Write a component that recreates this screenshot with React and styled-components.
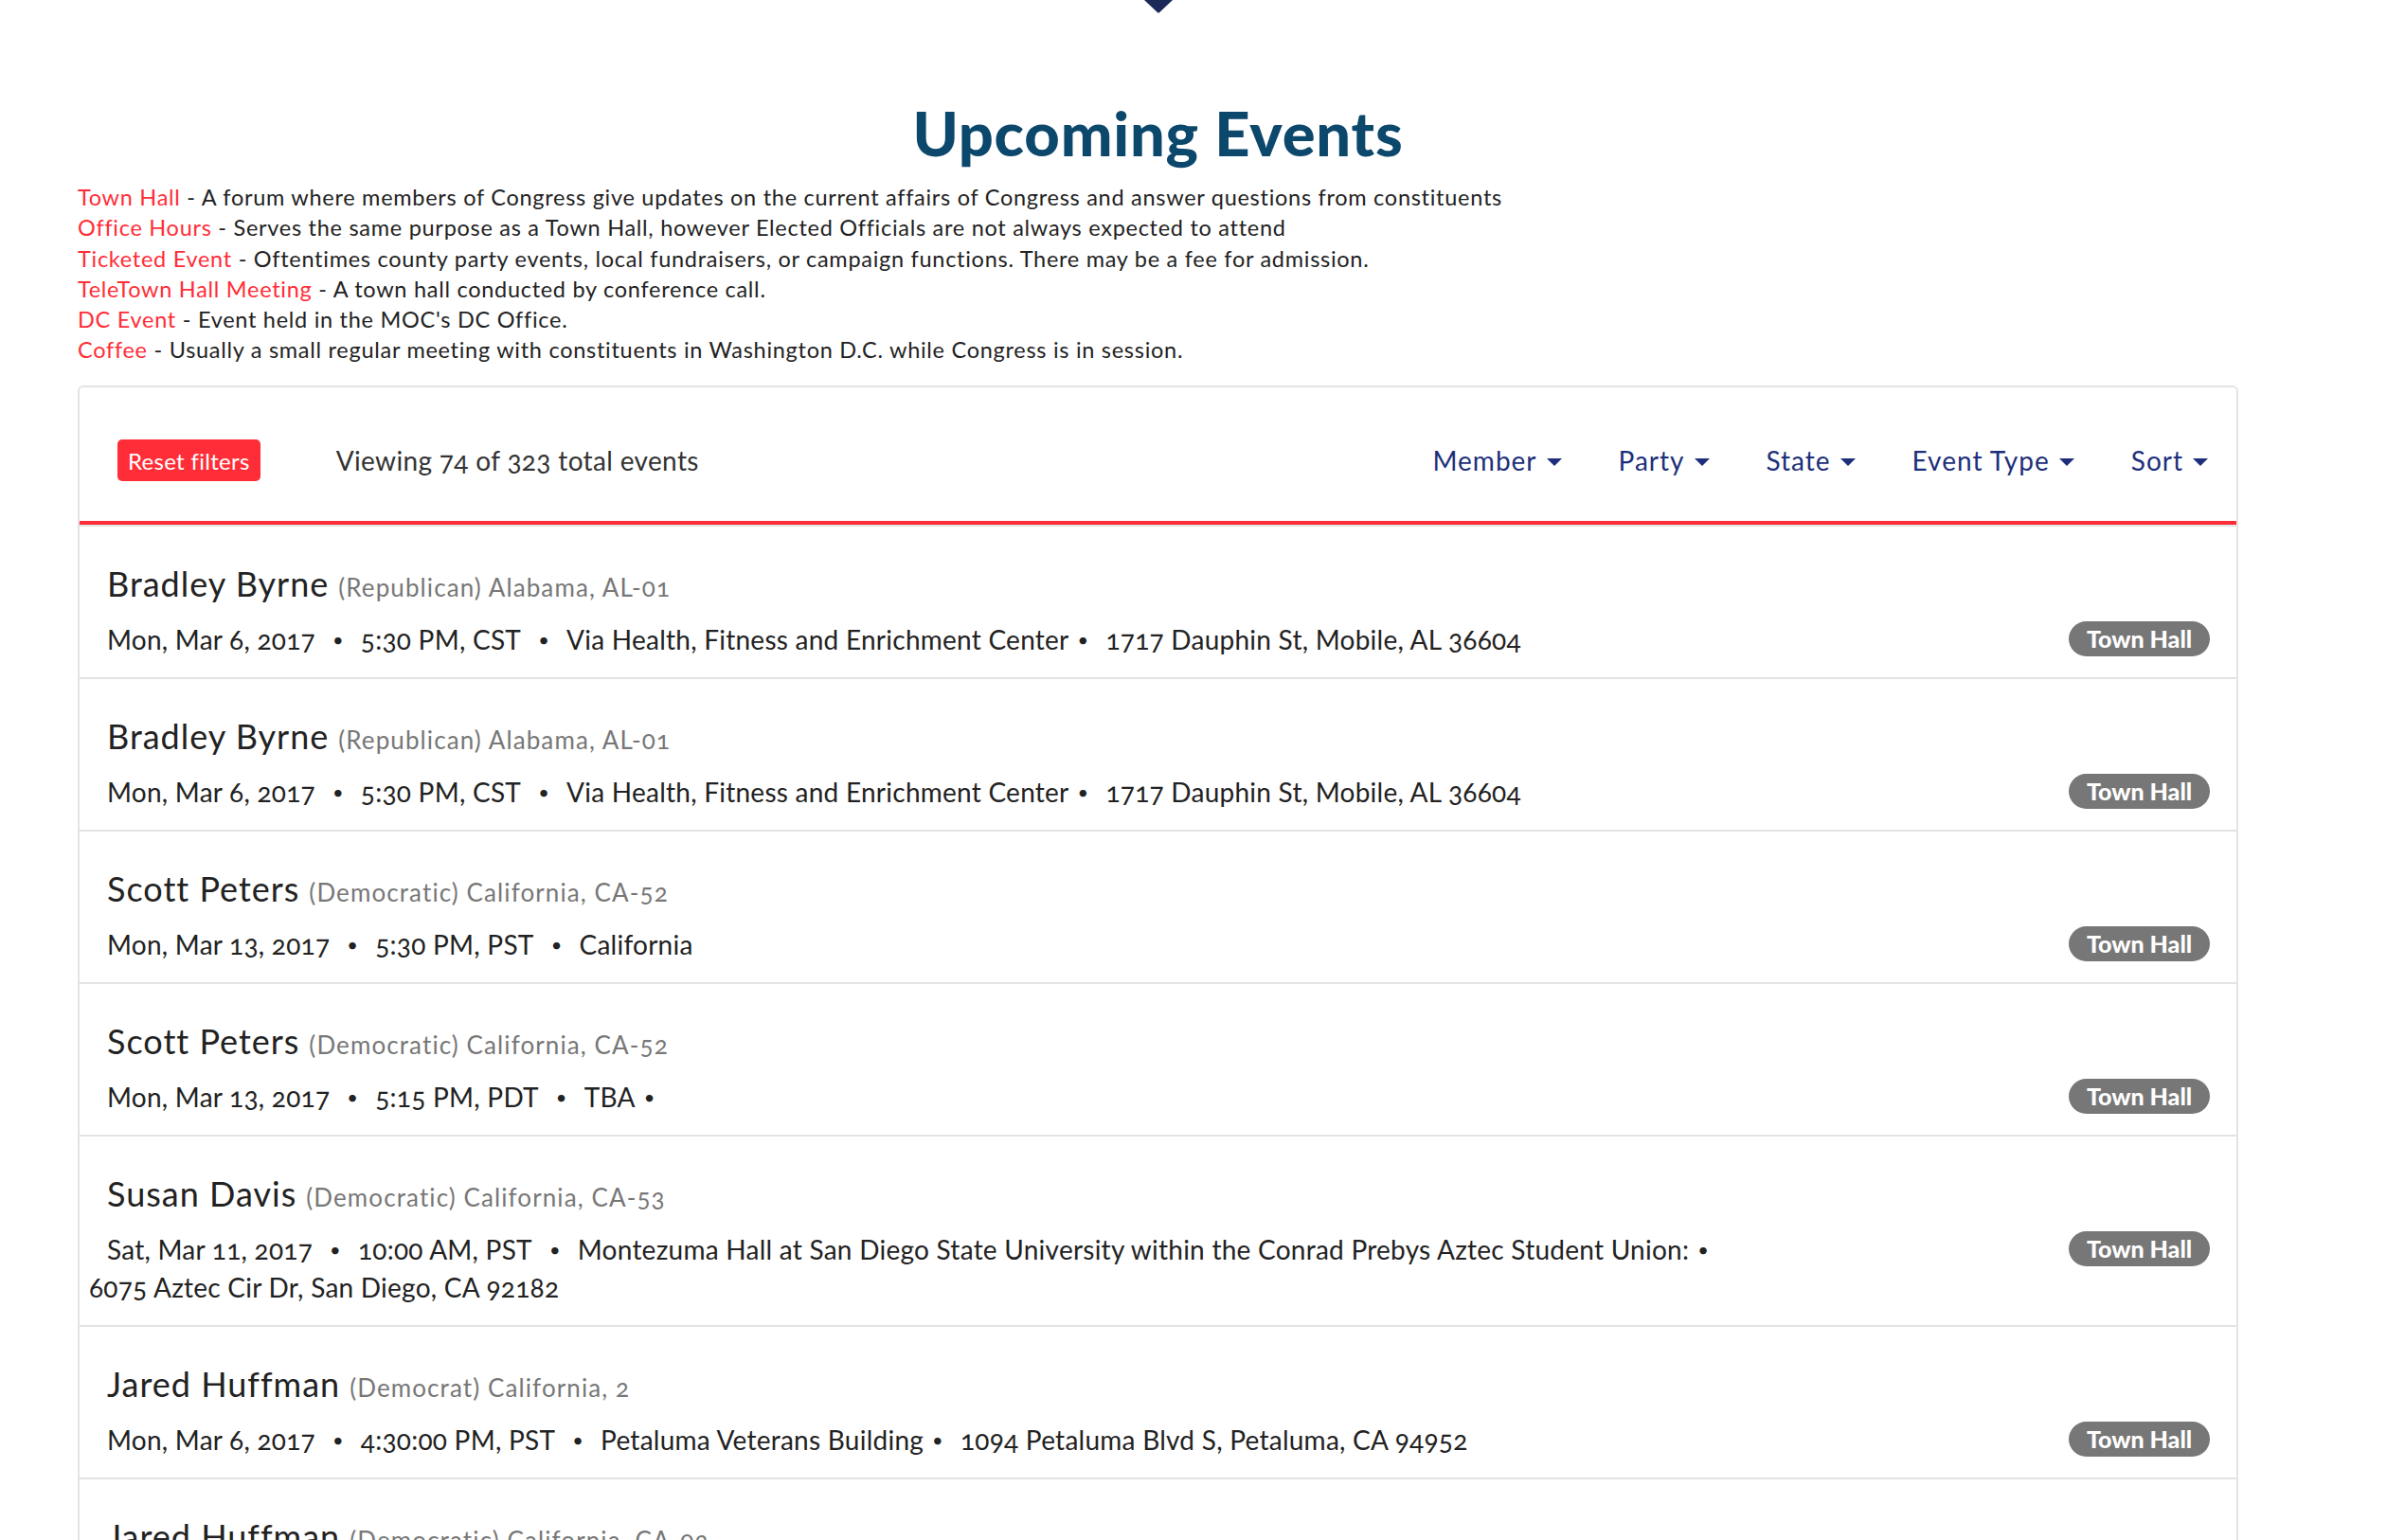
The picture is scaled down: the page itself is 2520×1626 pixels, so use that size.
import React from 'react';
import styled, { createGlobalStyle } from 'styled-components';

const GlobalStyle = createGlobalStyle`
  html, body {
    margin: 0;
    padding: 0;
    background: #fff;
  }
  body {
    font-family: Lato, "Open Sans", sans-serif;
    color: #222;
  }
`;

const definitions = [
  { term: 'Town Hall', text: 'A forum where members of Congress give updates on the current affairs of Congress and answer questions from constituents' },
  { term: 'Office Hours', text: 'Serves the same purpose as a Town Hall, however Elected Officials are not always expected to attend' },
  { term: 'Ticketed Event', text: 'Oftentimes county party events, local fundraisers, or campaign functions. There may be a fee for admission.' },
  { term: 'TeleTown Hall Meeting', text: 'A town hall conducted by conference call.' },
  { term: 'DC Event', text: "Event held in the MOC's DC Office." },
  { term: 'Coffee', text: 'Usually a small regular meeting with constituents in Washington D.C. while Congress is in session.' },
];

const events = [
  { name: 'Bradley Byrne', meta: '(Republican) Alabama, AL-01', date: 'Mon, Mar 6, 2017', time: '5:30 PM, CST', venue: 'Via Health, Fitness and Enrichment Center', address: '1717 Dauphin St, Mobile, AL 36604' },
  { name: 'Bradley Byrne', meta: '(Republican) Alabama, AL-01', date: 'Mon, Mar 6, 2017', time: '5:30 PM, CST', venue: 'Via Health, Fitness and Enrichment Center', address: '1717 Dauphin St, Mobile, AL 36604' },
  { name: 'Scott Peters', meta: '(Democratic) California, CA-52', date: 'Mon, Mar 13, 2017', time: '5:30 PM, PST', venue: '', address: 'California' },
  { name: 'Scott Peters', meta: '(Democratic) California, CA-52', date: 'Mon, Mar 13, 2017', time: '5:15 PM, PDT', venue: 'TBA', address: '' },
  { name: 'Susan Davis', meta: '(Democratic) California, CA-53', date: 'Sat, Mar 11, 2017', time: '10:00 AM, PST', venue: 'Montezuma Hall at San Diego State University within the Conrad Prebys Aztec Student Union:', address: '6075 Aztec Cir Dr, San Diego, CA 92182' },
  { name: 'Jared Huffman', meta: '(Democrat) California, 2', date: 'Mon, Mar 6, 2017', time: '4:30:00 PM, PST', venue: 'Petaluma Veterans Building', address: '1094 Petaluma Blvd S, Petaluma, CA 94952' },
  { name: 'Jared Huffman', meta: '(Democratic) California, CA-02', date: 'Sat, Mar 18, 2017', time: '10:00 AM, PDT', venue: 'Petaluma Veterans Building', address: '1094 Petaluma Blvd S, Petaluma, CA 94952' },
];

const filters = ['Member', 'Party', 'State', 'Event Type', 'Sort'];

const App = () => {
  return (
    <Viewport>
      <GlobalStyle />
      <Container>
        <TopArrow>
          <svg width="30" height="14" viewBox="0 0 30 14">
            <path d="M0 0 H30 L16.2 13 Q15 14 13.8 13 Z" fill="#1b2958" />
          </svg>
        </TopArrow>
        <Title>Upcoming Events</Title>
        <Definitions>
          {definitions.map((d) => (
            <DefLine key={d.term}>
              <Term>{d.term}</Term> - {d.text}
            </DefLine>
          ))}
        </Definitions>

        <Panel>
          <Toolbar>
            <ResetButton>Reset filters</ResetButton>
            <Count>Viewing 74 of 323 total events</Count>
            <Filters>
              {filters.map((f) => (
                <FilterToggle key={f}>
                  {f}
                  <Caret />
                </FilterToggle>
              ))}
            </Filters>
          </Toolbar>

          {events.map((ev, i) => (
            <EventRow key={i}>
              <NameLine>
                <Name>{ev.name}</Name>
                <Meta>{ev.meta}</Meta>
              </NameLine>
              <DetailRow>
                <Details>
                  <DateText>{ev.date}</DateText>
                  <Dot>•</Dot>
                  <span>{ev.time}</span>
                  {ev.venue && (
                    <>
                      <Dot>•</Dot>
                      <span>{ev.venue}</span>
                      <Dot $tight>•</Dot>
                    </>
                  )}
                  {!ev.venue && <Dot>•</Dot>}
                  {ev.address && <Address>{ev.address}</Address>}
                </Details>
                <Badge>Town Hall</Badge>
              </DetailRow>
            </EventRow>
          ))}
        </Panel>
      </Container>
    </Viewport>
  );
};

const Viewport = styled.div`
  width: 2520px;
  height: 1626px;
  overflow: hidden;
`;

const Container = styled.div`
  width: 2281px;
  margin-left: 82px;
`;

const TopArrow = styled.div`
  display: flex;
  justify-content: center;
  height: 14px;
  svg {
    display: block;
  }
`;

const Title = styled.h1`
  margin: 0;
  padding-top: 88px;
  text-align: center;
  font-family: Lato, sans-serif;
  font-weight: 900;
  font-size: 65px;
  line-height: 76px;
  color: #0c476c;
  letter-spacing: 0.8px;
`;

const Definitions = styled.div`
  margin-top: 14px;
`;

const DefLine = styled.div`
  font-size: 23.5px;
  line-height: 32.3px;
  letter-spacing: 0.72px;
  color: #222;
  font-feature-settings: "onum";
`;

const Term = styled.span`
  color: #ff2d37;
`;

const Panel = styled.div`
  margin-top: 21px;
  border: 2px solid #e3e3e3;
  border-radius: 6px;
  background: #fff;
`;

const Toolbar = styled.div`
  display: flex;
  align-items: center;
  height: 145px;
  padding: 14px 30px 0 40px;
  box-sizing: border-box;
  border-bottom: 4px solid #ff2d37;
`;

const ResetButton = styled.button`
  background: #ff2d37;
  color: #fff;
  border: none;
  border-radius: 5px;
  height: 44px;
  padding: 0 11px;
  font-family: Lato, sans-serif;
  font-size: 24px;
  letter-spacing: 0.3px;
  cursor: pointer;
`;

const Count = styled.div`
  margin-left: 80px;
  font-size: 28px;
  color: #333;
  letter-spacing: 0.35px;
  font-feature-settings: "onum";
`;

const Filters = styled.div`
  margin-left: auto;
  display: flex;
  align-items: center;
  gap: 60px;
`;

const FilterToggle = styled.div`
  display: flex;
  align-items: center;
  gap: 10px;
  font-size: 28px;
  letter-spacing: 1px;
  color: #1d2f7a;
  cursor: pointer;
`;

const Caret = styled.span`
  width: 0;
  height: 0;
  border-left: 8px solid transparent;
  border-right: 8px solid transparent;
  border-top: 8px solid #1d2f7a;
  margin-top: 3px;
`;

const EventRow = styled.div`
  border-top: 2px solid #e3e3e3;
  padding: 35px 28px 20px 10px;
`;

const NameLine = styled.div`
  display: flex;
  align-items: baseline;
  height: 50px;
  line-height: 50px;
  padding-left: 19px;
  white-space: nowrap;
`;

const Name = styled.span`
  font-size: 36px;
  letter-spacing: 1px;
  color: #222;
`;

const Meta = styled.span`
  margin-left: 10px;
  font-size: 26px;
  letter-spacing: 1.1px;
  color: #777;
  font-feature-settings: "onum";
`;

const DetailRow = styled.div`
  display: flex;
  align-items: flex-start;
  margin-top: 14px;
`;

const Details = styled.div`
  flex: 1;
  font-size: 28px;
  line-height: 40px;
  letter-spacing: 0.25px;
  color: #222;
  padding-right: 40px;
  font-feature-settings: "onum";
`;

const DateText = styled.span`
  margin-left: 19px;
`;

const Dot = styled.span`
  display: inline-block;
  font-size: 20px;
  line-height: 40px;
  height: 40px;
  margin: ${(p) => (p.$tight ? '0 18px 0 9px' : '0 18px')};
  vertical-align: top;
`;

const Address = styled.span`
  display: inline-block;
  white-space: nowrap;
`;

const Badge = styled.span`
  flex: none;
  margin-top: 1px;
  width: 149px;
  height: 37px;
  border-radius: 19px;
  background: #777;
  color: #fff;
  font-weight: 900;
  font-size: 25px;
  line-height: 37px;
  text-align: center;
`;

export default App;
